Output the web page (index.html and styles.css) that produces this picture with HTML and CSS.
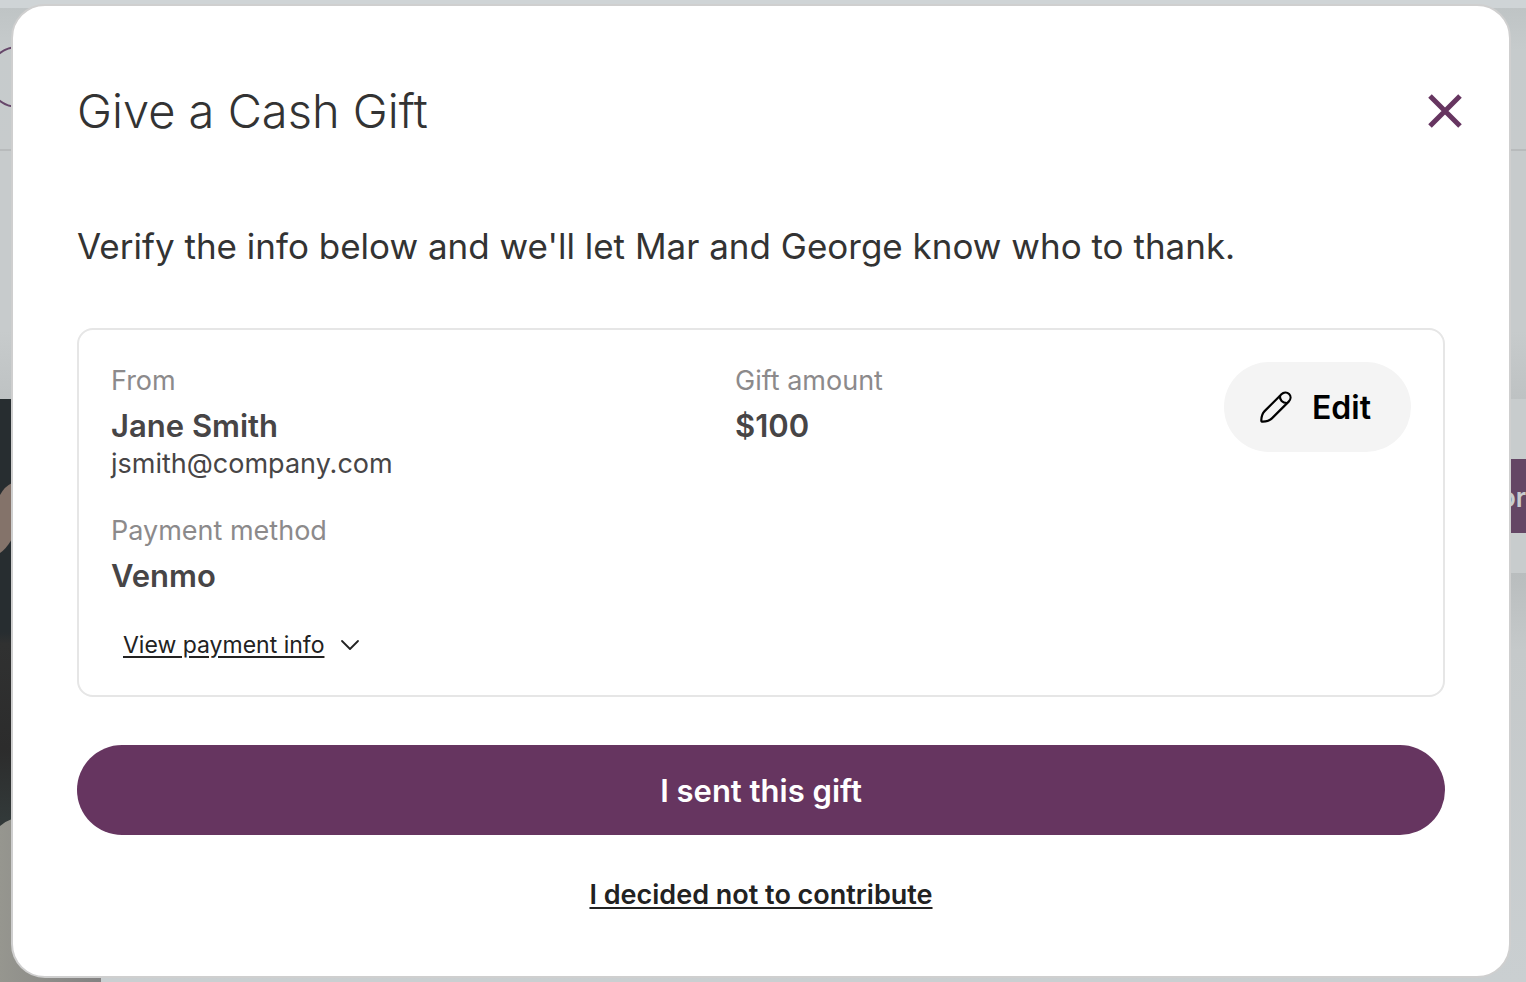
FILE: index.html
```html
<!DOCTYPE html>
<html lang="en">
<head>
<meta charset="utf-8">
<meta name="viewport" content="width=device-width, initial-scale=1">
<title>Give a Cash Gift</title>
<link rel="stylesheet" href="styles.css">
</head>
<body>
<div class="page" aria-hidden="true">
  <div class="page-strip"></div>
  <div class="page-header"><span class="page-avatar"></span></div>
  <div class="page-body">
    <svg class="page-photo" viewBox="0 0 101 583" preserveAspectRatio="none">
      <defs>
        <linearGradient id="dark" x1="0" y1="0" x2="0" y2="1">
          <stop offset="0" stop-color="#272d30"/><stop offset=".4" stop-color="#272d30"/>
          <stop offset=".42" stop-color="#303131"/><stop offset=".6" stop-color="#2c2c2c"/><stop offset=".72" stop-color="#323939"/>
        </linearGradient>
        <linearGradient id="sleeve" x1="0" y1="0" x2="1" y2="0">
          <stop offset="0" stop-color="#96968f"/><stop offset="1" stop-color="#838282"/>
        </linearGradient>
      </defs>
      <path fill="url(#dark)" d="M0 0h101v583H0z"/>
      <path fill="#84736a" d="M0 96Q5 87 12 84V140Q6 150 0 154z"/>
      <path fill="url(#sleeve)" d="M0 427Q6 422 12 420L101 400V583H0z"/>
    </svg>
    <div class="page-panel"><div class="page-action">or</div></div>
  </div>
</div>

<main class="modal" role="dialog" aria-modal="true" aria-labelledby="title">
  <header class="modal-header">
    <h1 class="modal-title" id="title">Give a Cash Gift</h1>
    <button class="close" type="button" aria-label="Close">
      <svg width="36" height="36" viewBox="0 0 36 36" fill="none" stroke="currentColor" stroke-width="5"><path d="M3 3l30 30M33 3l-30 30"/></svg>
    </button>
  </header>
  <p class="intro">Verify the info below and we'll let Mar and George know who to thank.</p>
  <section class="card">
    <dl class="details">
      <div class="detail">
        <dt class="label">From</dt>
        <dd class="value">Jane Smith</dd>
        <dd class="email">jsmith@company.com</dd>
      </div>
      <div class="detail">
        <dt class="label">Gift amount</dt>
        <dd class="value">$100</dd>
      </div>
      <div class="detail">
        <dt class="label">Payment method</dt>
        <dd class="value">Venmo</dd>
      </div>
    </dl>
    <button class="edit" type="button">
      <svg width="32" height="32" viewBox="0 0 32 32" fill="none" stroke="currentColor" stroke-width="2.2" stroke-linejoin="round"><path d="M20.5 4.2L4.6 20.1C2 22.8 1.4 26 1.3 29.2C1.3 30.2 1.8 30.7 2.8 30.7C6 30.6 9.2 30 11.9 27.4L28.7 10.6C30.9 8.4 31.2 5.2 29.1 3C26.9.8 23.6 1.1 21.4 3.3z"/><path d="M20 4.7C19.5 8.9 22.4 12.2 27.2 12"/></svg>
      <span>Edit</span>
    </button>
    <button class="disclosure" type="button" aria-expanded="false">
      <span class="disclosure-text">View payment info</span>
      <svg width="20" height="12" viewBox="0 0 20 12" fill="none" stroke="currentColor" stroke-width="1.8" stroke-linecap="round" stroke-linejoin="round"><path d="M2 2l8 8 8-8"/></svg>
    </button>
  </section>
  <button class="primary" type="button">I sent this gift</button>
  <a class="decline" href="#">I decided not to contribute</a>
</main>
</body>
</html>
```
FILE: styles.css
```css
* { box-sizing: border-box; }
body {
  margin: 0;
  font-family: Inter, "Open Sans", sans-serif;
  color: #333;
  background: #c8ccce;
}
button { font: inherit; border: 0; cursor: pointer; }

.page {
  display: flex;
  flex-direction: column;
  height: 100vh;
  overflow: hidden;
}
.page-strip { height: 8px; background: #cfd4d6; }
.page-header {
  height: 143px;
  padding-top: 38px;
  border-bottom: 2px solid #b8bbbc;
  background: linear-gradient(#bfc4c5, #c6cbcc 30%, #c7cbcc);
}
.page-avatar {
  display: block;
  width: 62px;
  height: 62px;
  margin-left: -13px;
  border: 2px solid #66476a;
  border-radius: 50%;
}
.page-body {
  flex: 1;
  display: flex;
  justify-content: space-between;
  align-items: flex-start;
  padding-top: 248px;
  background: linear-gradient(#c7cbcc 0, #c7cbcc 180px, #bec2c3 248px, #b9bdbe 422px, #c5c9ca 500px, #cacfd1);
}
.page-photo { width: 101px; height: 583px; }
.page-panel {
  width: 80px;
  padding: 60px 0 40px;
  background: #c8cccd;
}
.page-action {
  height: 74px;
  padding-left: 54px;
  background: #644665;
  color: #c8ccce;
  font-size: 26px;
  font-weight: 600;
  line-height: 78px;
  white-space: nowrap;
}

.modal {
  position: absolute;
  top: 4px;
  left: 11px;
  right: 15px;
  display: flex;
  flex-direction: column;
  padding: 72px 64px 61px;
  border: 2px solid #cfcfcf;
  border-radius: 34px;
  background: #fff;
}
.modal-header {
  display: flex;
  justify-content: space-between;
  align-items: center;
  margin-right: -18px;
}
.modal-title {
  margin: 0;
  font-size: 47px;
  font-weight: 300;
  line-height: 66px;
}
.close {
  display: flex;
  padding: 0;
  color: #663560;
  background: none;
}
.intro {
  margin: 75px 0 0;
  font-size: 35px;
  font-weight: 400;
  line-height: 54px;
}
.card {
  display: grid;
  grid-template-columns: 1fr auto;
  align-items: start;
  margin-top: 55px;
  padding: 32px 32px 26px;
  border: 2px solid #e6e6e6;
  border-radius: 16px;
}
.details {
  display: grid;
  grid-template-columns: 624px 1fr;
  row-gap: 29px;
  margin: 0;
}
.detail dd { margin: 0; }
.label {
  color: #8c8a8b;
  font-size: 27px;
  font-weight: 400;
  line-height: 38px;
}
.detail .value {
  margin-top: 7px;
  color: #474546;
  font-size: 31px;
  font-weight: 600;
  line-height: 38px;
}
.email {
  color: #474546;
  font-size: 27px;
  font-weight: 400;
  line-height: 38px;
}
.edit {
  display: flex;
  align-items: center;
  gap: 20px;
  height: 90px;
  padding: 0 40px 0 36px;
  border-radius: 45px;
  background: #f4f4f4;
  color: #000;
  font-size: 32px;
  font-weight: 600;
}
.disclosure {
  grid-column: 1 / -1;
  justify-self: start;
  display: flex;
  align-items: center;
  gap: 16px;
  margin-top: 26px;
  padding: 8px 12px;
  background: none;
  color: #222;
  font-size: 23px;
  font-weight: 400;
  line-height: 32px;
}
.disclosure-text, .decline {
  text-decoration: underline;
  text-decoration-thickness: 2px;
  text-underline-offset: 3px;
}
.primary {
  height: 90px;
  margin-top: 48px;
  border-radius: 45px;
  background: #663560;
  color: #fff;
  font-size: 31px;
  font-weight: 600;
}
.decline {
  align-self: center;
  margin-top: 40px;
  color: #222;
  font-size: 27px;
  font-weight: 600;
  line-height: 40px;
}
```
